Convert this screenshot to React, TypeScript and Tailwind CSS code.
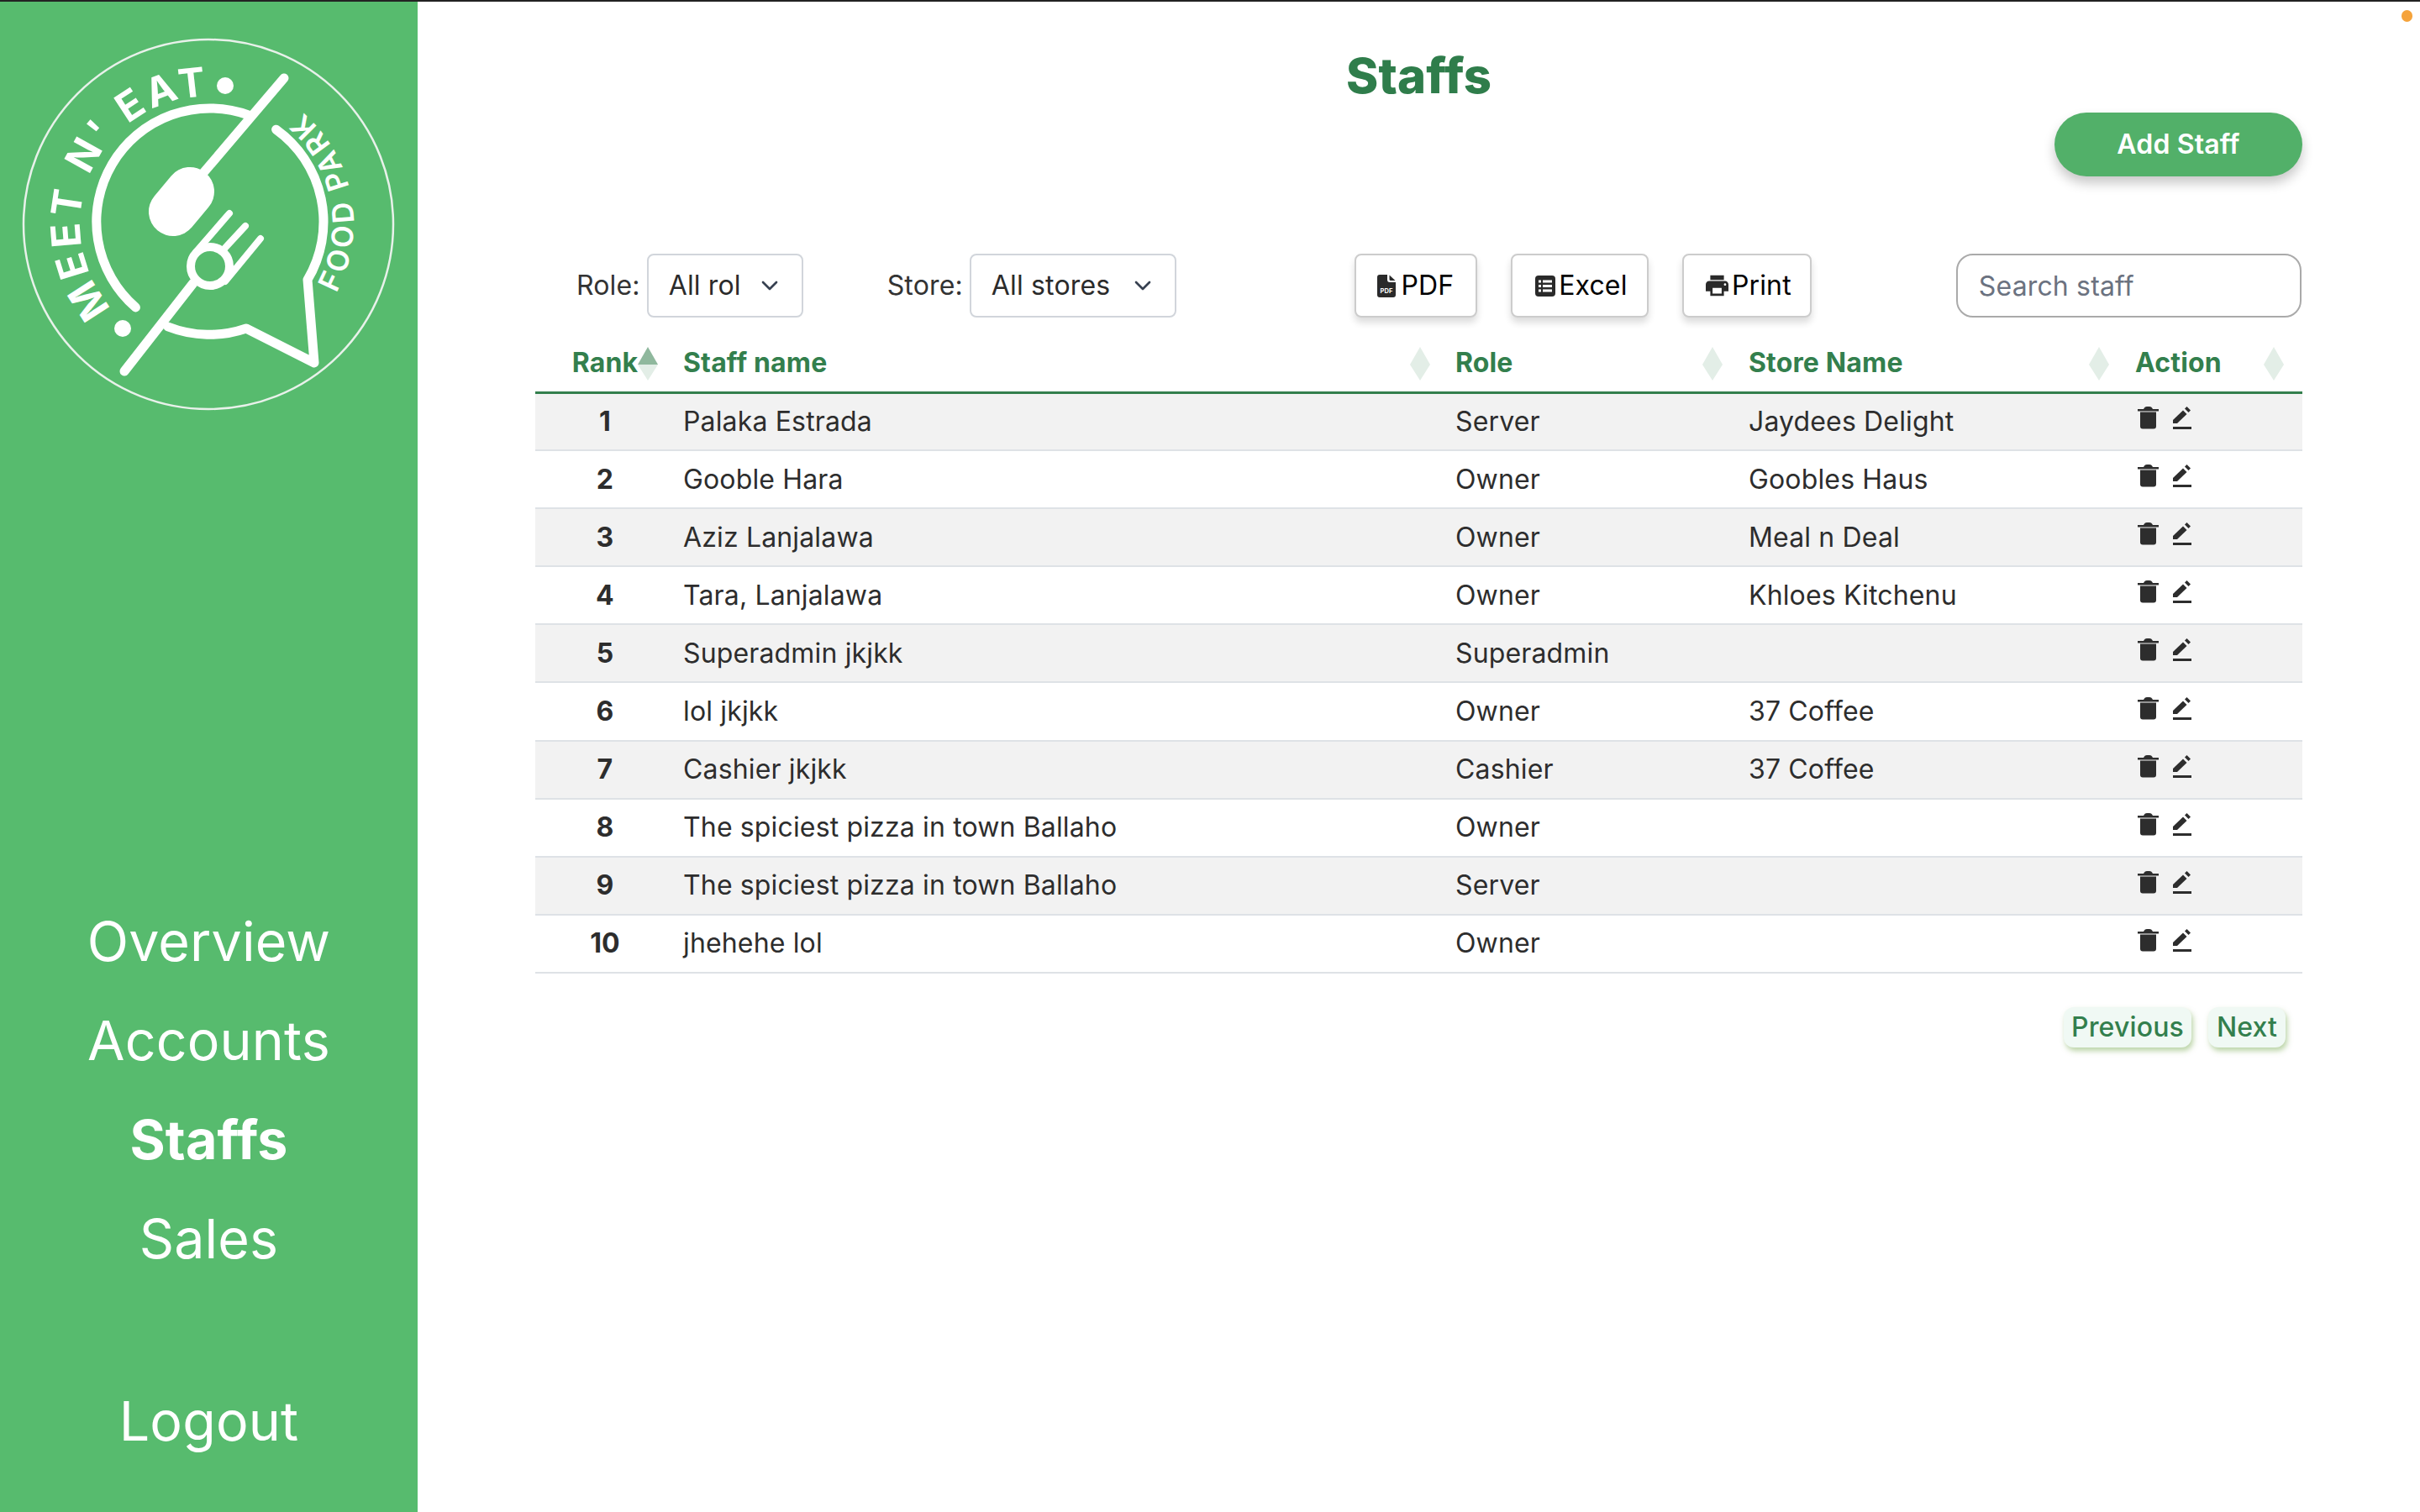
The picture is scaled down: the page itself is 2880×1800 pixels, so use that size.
import { ChevronDown } from 'lucide-react'

const staffRows = [
  { rank: 1, name: 'Palaka Estrada', role: 'Server', store: 'Jaydees Delight' },
  { rank: 2, name: 'Gooble Hara', role: 'Owner', store: 'Goobles Haus' },
  { rank: 3, name: 'Aziz Lanjalawa', role: 'Owner', store: 'Meal n Deal' },
  { rank: 4, name: 'Tara, Lanjalawa', role: 'Owner', store: 'Khloes Kitchenu' },
  { rank: 5, name: 'Superadmin jkjkk', role: 'Superadmin', store: '' },
  { rank: 6, name: 'lol jkjkk', role: 'Owner', store: '37 Coffee' },
  { rank: 7, name: 'Cashier jkjkk', role: 'Cashier', store: '37 Coffee' },
  { rank: 8, name: 'The spiciest pizza in town Ballaho', role: 'Owner', store: '' },
  { rank: 9, name: 'The spiciest pizza in town Ballaho', role: 'Server', store: '' },
  { rank: 10, name: 'jhehehe lol', role: 'Owner', store: '' },
]

function Logo() {
  return (
    <svg width="497" height="530" viewBox="0 0 497 530" fill="none" className="shrink-0">
      <circle cx="248" cy="265" r="220" stroke="#e8f1ea" strokeWidth="2.5" />
      <g stroke="#fff" strokeLinecap="round" strokeLinejoin="round">
        <path d="M161.4 363.9 A135 135 0 0 1 296.2 135.1" strokeWidth="11" />
        <path d="M328.6 152.2 A135 135 0 0 1 366 331 L374 430 L293 389 A135 135 0 0 1 200 387" strokeWidth="11" />
        <path d="M338 91 L241 205" strokeWidth="11" />
        <path d="M226 226 L206 250" strokeWidth="58" />
        <path d="M230 335 L148 440" strokeWidth="11" />
        <circle cx="250" cy="315" r="23" strokeWidth="10" />
        <path d="M273 252 L233 298" strokeWidth="8" />
        <path d="M292 267 L267 294" strokeWidth="8" />
        <path d="M310 282 L268 333" strokeWidth="8" />
      </g>
      <circle cx="268" cy="100" r="10" fill="#fff" />
      <circle cx="146" cy="389" r="10" fill="#fff" />
      <defs>
        <path id="logo-top-arc" d="M133 365 A152 152 0 0 1 287 118" />
        <path id="logo-side-arc" d="M400 347 A174 174 0 0 0 360 132" />
      </defs>
      <text fill="#fff" fontFamily="Inter, sans-serif" fontWeight="700" fontSize="48">
        <textPath href="#logo-top-arc" textLength="347" lengthAdjust="spacing">MEET N' EAT</textPath>
      </text>
      <text fill="#fff" fontFamily="Inter, sans-serif" fontWeight="600" fontSize="35">
        <textPath href="#logo-side-arc" textLength="236" lengthAdjust="spacing">FOOD PARK</textPath>
      </text>
    </svg>
  )
}

function SortArrows({ active = false, className = '' }: { active?: boolean; className?: string }) {
  return (
    <svg width="24" height="40" viewBox="0 0 24 40" className={`absolute top-[35px] ${className}`}>
      <path d="M12 0 L24 21 H0 Z" fill={active ? '#8fb89d' : '#e3eee7'} />
      <path d="M0 21 H24 L12 40 Z" fill="#e3eee7" />
    </svg>
  )
}

function TrashIcon() {
  return (
    <svg width="25" height="27" viewBox="0 0 25 27" fill="#2d2d2d">
      <path d="M7 3 C8 1 9 0 11 0 h3 c2 0 3 1 4 3z" />
      <rect y="3" width="25" height="2.5" />
      <path d="M3 6.5 h19 v17 a3 3 0 0 1 -3 3 h-13 a3 3 0 0 1 -3 -3z" />
    </svg>
  )
}

function EditIcon() {
  return (
    <svg width="22" height="27" viewBox="0 0 22 27" fill="#2d2d2d">
      <path d="M0 20 v-4 L12 4.5 l4.5 4.5 L5 20z" />
      <path d="M14 2.5 l2.5 -2.5 l4.5 4.5 l-2.5 2.5z" />
      <rect y="24" width="22" height="3" />
    </svg>
  )
}

function PdfIcon() {
  return (
    <svg width="22" height="27" viewBox="0 0 22 27" className="mr-[2px]">
      <path d="M3 0 H12 V6 a3 3 0 0 0 3 3 H22 V24 a3 3 0 0 1 -3 3 H3 a3 3 0 0 1 -3 -3 V3 a3 3 0 0 1 3 -3z" fill="#2a2a2a" />
      <path d="M14.5 0.5 L21.5 7 H16 a1.5 1.5 0 0 1 -1.5 -1.5z" fill="#2a2a2a" />
      <text x="11" y="22" textAnchor="middle" fill="#fff" fontSize="7.5" fontWeight="700" fontFamily="Inter, sans-serif">PDF</text>
    </svg>
  )
}

function ListIcon() {
  return (
    <svg width="24" height="25" viewBox="0 0 24 25">
      <rect width="24" height="25" rx="4" fill="#2a2a2a" />
      <g fill="#fff">
        <rect x="4" y="5.5" width="3" height="3" />
        <rect x="9" y="5.5" width="11" height="3" />
        <rect x="4" y="11" width="3" height="3" />
        <rect x="9" y="11" width="11" height="3" />
        <rect x="4" y="16.5" width="3" height="3" />
        <rect x="9" y="16.5" width="11" height="3" />
      </g>
    </svg>
  )
}

function PrintIcon() {
  return (
    <svg width="27" height="26" viewBox="2 3 20 18" fill="#2a2a2a">
      <path d="M19 8H5c-1.66 0-3 1.34-3 3v6h4v4h12v-4h4v-6c0-1.66-1.34-3-3-3zm-3 11H8v-5h8v5zm3-7c-.55 0-1-.45-1-1s.45-1 1-1 1 .45 1 1-.45 1-1 1zm-1-9H6v4h12V3z" />
    </svg>
  )
}

function FilterSelect({ label, value, width, className = '' }: { label: string; value: string; width: string; className?: string }) {
  return (
    <div className={`flex items-center gap-[8px] ${className}`}>
      <span className="text-[#333]">{label}</span>
      <div className={`flex h-[76px] items-center justify-between rounded-lg border-2 border-[#d1d5db] pl-[24px] pr-[22px] text-[#2b2b2b] ${width}`}>
        <span>{value}</span>
        <ChevronDown size={32} strokeWidth={2} className="text-[#374151]" />
      </div>
    </div>
  )
}

function ExportButton({ label, icon, width, className = '' }: { label: string; icon: React.ReactNode; width: string; className?: string }) {
  return (
    <button className={`flex h-[76px] items-center justify-center gap-[4px] rounded-lg border-2 border-[#cccccc] bg-white text-black shadow-[0_6px_8px_rgba(0,0,0,0.14)] ${width} ${className}`}>
      {icon}
      {label}
    </button>
  )
}

export default function App() {
  return (
    <div className="relative flex min-h-screen border-t-2 border-[#222] bg-white font-['Inter',sans-serif] text-[32px] tracking-[0.15px]">
      <aside className="flex w-[497px] shrink-0 flex-col items-center bg-[#57bb6e] text-white">
        <Logo />
        <nav className="mt-[547px] flex flex-col items-center gap-[34px] text-[64.5px] leading-[84px] font-normal">
          <a>Overview</a>
          <a>Accounts</a>
          <a className="font-bold">Staffs</a>
          <a>Sales</a>
          <a className="mt-[99px]">Logout</a>
        </nav>
      </aside>

      <main className="min-w-0 flex-1 px-[140px]">
        <h1 className="pt-[52px] text-center text-[58px] leading-[72px] font-extrabold text-[#2f7d4b]">Staffs</h1>
        <div className="mt-[8px] flex justify-end">
          <button className="h-[76px] w-[295px] rounded-full bg-[#52b069] font-semibold text-white shadow-[0_8px_14px_rgba(0,0,0,0.22)]">
            Add Staff
          </button>
        </div>

        <div className="mt-[92px] flex items-center pl-[49px]">
          <FilterSelect label="Role:" value="All rol" width="w-[186px]" />
          <FilterSelect label="Store:" value="All stores" width="w-[246px]" className="ml-[100px]" />
          <ExportButton label="PDF" icon={<PdfIcon />} width="w-[146px]" className="ml-[212px]" />
          <ExportButton label="Excel" icon={<ListIcon />} width="w-[164px]" className="ml-[40px] pl-[4px]" />
          <ExportButton label="Print" icon={<PrintIcon />} width="w-[154px]" className="ml-[40px] pl-[4px]" />
          <input
            placeholder="Search staff"
            className="ml-[172px] h-[76px] w-[411px] rounded-[20px] border-2 border-[#aaaaaa] px-[25px] placeholder:text-[#6b7280]"
          />
        </div>

        <table className="w-full table-fixed">
          <colgroup>
            <col className="w-[152px]" />
            <col className="w-[919px]" />
            <col className="w-[349px]" />
            <col className="w-[460px]" />
            <col className="w-[223px]" />
          </colgroup>
          <thead>
            <tr className="h-[89px] text-left text-[#337f4d]">
              <th className="relative pt-[20px] pl-[14px] text-center font-bold">
                Rank
                <SortArrows active className="right-[6px]" />
              </th>
              <th className="relative pt-[20px] pl-[24px] font-bold">
                Staff name
                <SortArrows className="right-[6px]" />
              </th>
              <th className="relative pt-[20px] pl-[24px] font-bold">
                Role
                <SortArrows className="right-[7px]" />
              </th>
              <th className="relative pt-[20px] pl-[24px] font-bold">
                Store Name
                <SortArrows className="right-[7px]" />
              </th>
              <th className="relative pt-[20px] pl-[24px] font-bold">
                Action
                <SortArrows className="right-[22px]" />
              </th>
            </tr>
          </thead>
          <tbody className="border-t-[3px] border-[#337f4d] text-[#2d2d2d]">
            {staffRows.map((row) => (
              <tr key={row.rank} className="h-[69.1px] border-b-2 border-[#dee2e6] odd:bg-[#f2f2f2]">
                <td className="pl-[14px] text-center font-bold">{row.rank}</td>
                <td className="pl-[24px]">{row.name}</td>
                <td className="pl-[24px]">{row.role}</td>
                <td className="pl-[24px]">{row.store}</td>
                <td className="pl-[27px]">
                  <div className="-mt-[8px] flex items-center gap-[17px]">
                    <TrashIcon />
                    <EditIcon />
                  </div>
                </td>
              </tr>
            ))}
          </tbody>
        </table>

        <div className="mt-[40px] flex justify-end gap-[20px] pr-[20px]">
          <button className="flex h-[48px] w-[152px] items-center justify-center rounded-xl bg-[#f0f9f4] font-medium text-[#337f4d] shadow-[2px_4px_6px_rgba(120,170,80,0.5)]">
            Previous
          </button>
          <button className="flex h-[48px] w-[92px] items-center justify-center rounded-xl bg-[#f0f9f4] font-medium text-[#337f4d] shadow-[2px_4px_6px_rgba(120,170,80,0.5)]">
            Next
          </button>
        </div>
      </main>

      {/* recording indicator in the corner */}
      <span className="absolute top-[10px] right-[9px] h-[14px] w-[13px] rounded-full bg-[#f5a33b]" />
    </div>
  )
}
